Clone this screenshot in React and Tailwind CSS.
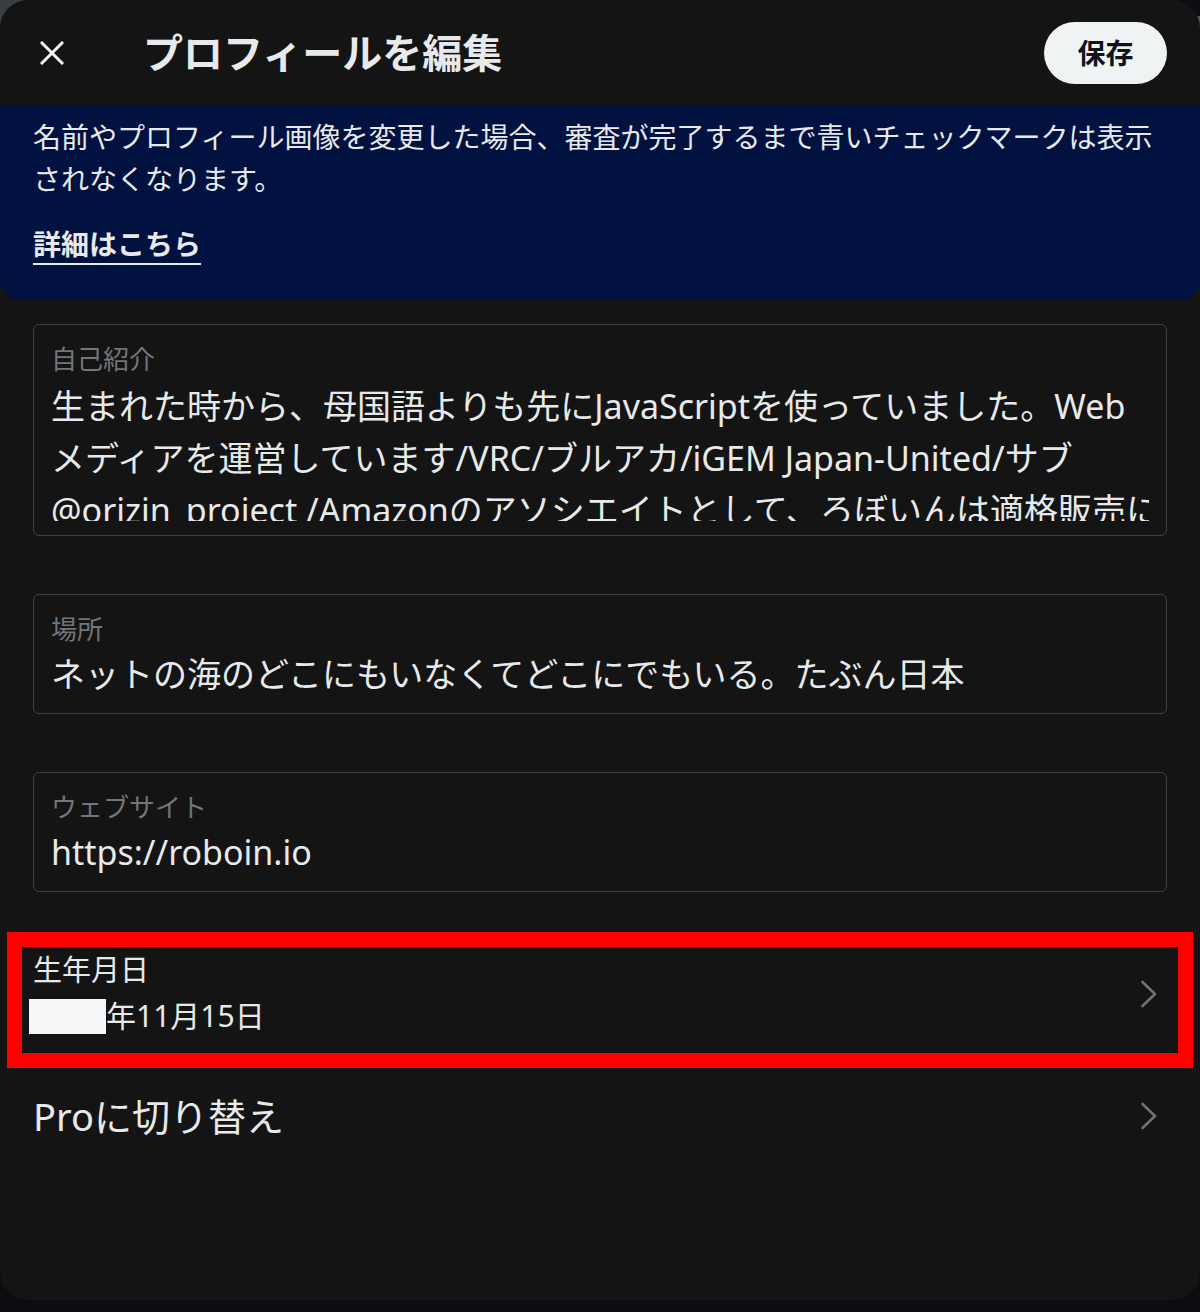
const FONT = "font-[family-name:'Noto_Sans','Noto_Sans_CJK_JP',sans-serif]";

function Chevron() {
  return (
    <svg width="18" height="28" viewBox="0 0 18 28" fill="none" className="shrink-0">
      <path d="M2.5 2 L15 14 L2.5 26" stroke="#6e7378" strokeWidth="2.6" strokeLinecap="round" strokeLinejoin="round" />
    </svg>
  );
}

function Field({ label, children }) {
  return (
    <div className="mx-[33px] mt-[58px] h-[120px] rounded-[6px] border border-[#3e4144] px-[17px] pt-[17px]">
      <div className="text-[26px] leading-[34px] text-[#71767b]">{label}</div>
      <div className="mt-[2px] whitespace-nowrap text-[34px] leading-[52px] text-[#e7e9ea]">{children}</div>
    </div>
  );
}

export default function App() {
  return (
    <div className={`relative min-h-screen bg-[#0c0d10] ${FONT}`}>
      {/* grey corner peeking behind the sheet */}
      <div className="absolute left-0 top-0 h-10 w-10 bg-[#3a3d44]" />
      <div className="absolute right-0 top-4 h-10 w-[3px] bg-[#55585e]" />

      <div className="relative flex h-[1300px] flex-col overflow-hidden rounded-[28px] bg-[#141414]">
        {/* header */}
        <div className="flex h-[105px] shrink-0 items-center pl-[40px] pr-[33px]">
          <svg width="24" height="24" viewBox="0 0 24 24" className="shrink-0">
            <path d="M2 2 L22 22 M22 2 L2 22" stroke="#eff3f4" strokeWidth="3" strokeLinecap="square" />
          </svg>
          <h1 className="ml-[79px] text-[40px] font-bold leading-none text-[#e7e9ea]">プロフィールを編集</h1>
          <button className="ml-auto flex h-[62px] w-[123px] items-center justify-center rounded-full bg-[#eff3f4] text-[28px] font-bold text-[#0f1419]">
            保存
          </button>
        </div>

        {/* verification notice */}
        <div className="rounded-b-[20px] bg-[#011140] px-[33px] pb-[35px] pt-[11px] text-[28px] leading-[42px] text-[#e7e9ea]">
          <p>名前やプロフィール画像を変更した場合、審査が完了するまで青いチェックマークは表示されなくなります。</p>
          <a className="mt-[23px] inline-block font-bold underline decoration-2 underline-offset-[8px]">詳細はこちら</a>
        </div>

        {/* bio, scrolled to the top of a fixed-height textarea */}
        <div className="mx-[33px] mt-[24px] h-[212px] rounded-[6px] border border-[#3e4144] px-[17px] pt-[17px]">
          <div className="text-[26px] leading-[34px] text-[#71767b]">自己紹介</div>
          <div className="mt-[4px] h-[141px] overflow-hidden text-[34px] leading-[52px] text-[#e7e9ea]">
            <div className="whitespace-nowrap">生まれた時から、母国語よりも先にJavaScriptを使っていました。Web</div>
            <div className="whitespace-nowrap">メディアを運営しています/VRC/ブルアカ/iGEM Japan-United/サブ</div>
            <div className="whitespace-nowrap">@orizin_project /Amazonのアソシエイトとして、ろぼいんは適格販売に</div>
          </div>
        </div>

        <Field label="場所">ネットの海のどこにもいなくてどこにでもいる。たぶん日本</Field>
        <Field label="ウェブサイト">https://roboin.io</Field>

        {/* birthday */}
        <div className="relative mt-[48px] flex items-center justify-between pb-[12px] pl-[33px] pr-[42px] pt-[12px]">
          <div>
            <div className="text-[29px] leading-[36px] text-[#e7e9ea]">生年月日</div>
            <div className="mt-[8px] flex items-center text-[30px] leading-[40px] text-[#e7e9ea]">
              <span className="ml-[-4px] inline-block h-[35px] w-[77px] bg-[#f5f6f8]" />
              <span>年11月15日</span>
            </div>
          </div>
          <Chevron />
          <div className="pointer-events-none absolute -bottom-[20px] -top-[8px] left-[7px] right-[7px] border-[15px] border-[#ff0000]" />
        </div>

        {/* pro switch */}
        <div className="mt-[44px] flex items-center justify-between pl-[33px] pr-[42px]">
          <span className="text-[38px] leading-[48px] text-[#e7e9ea]">Proに切り替え</span>
          <Chevron />
        </div>
      </div>
    </div>
  );
}
